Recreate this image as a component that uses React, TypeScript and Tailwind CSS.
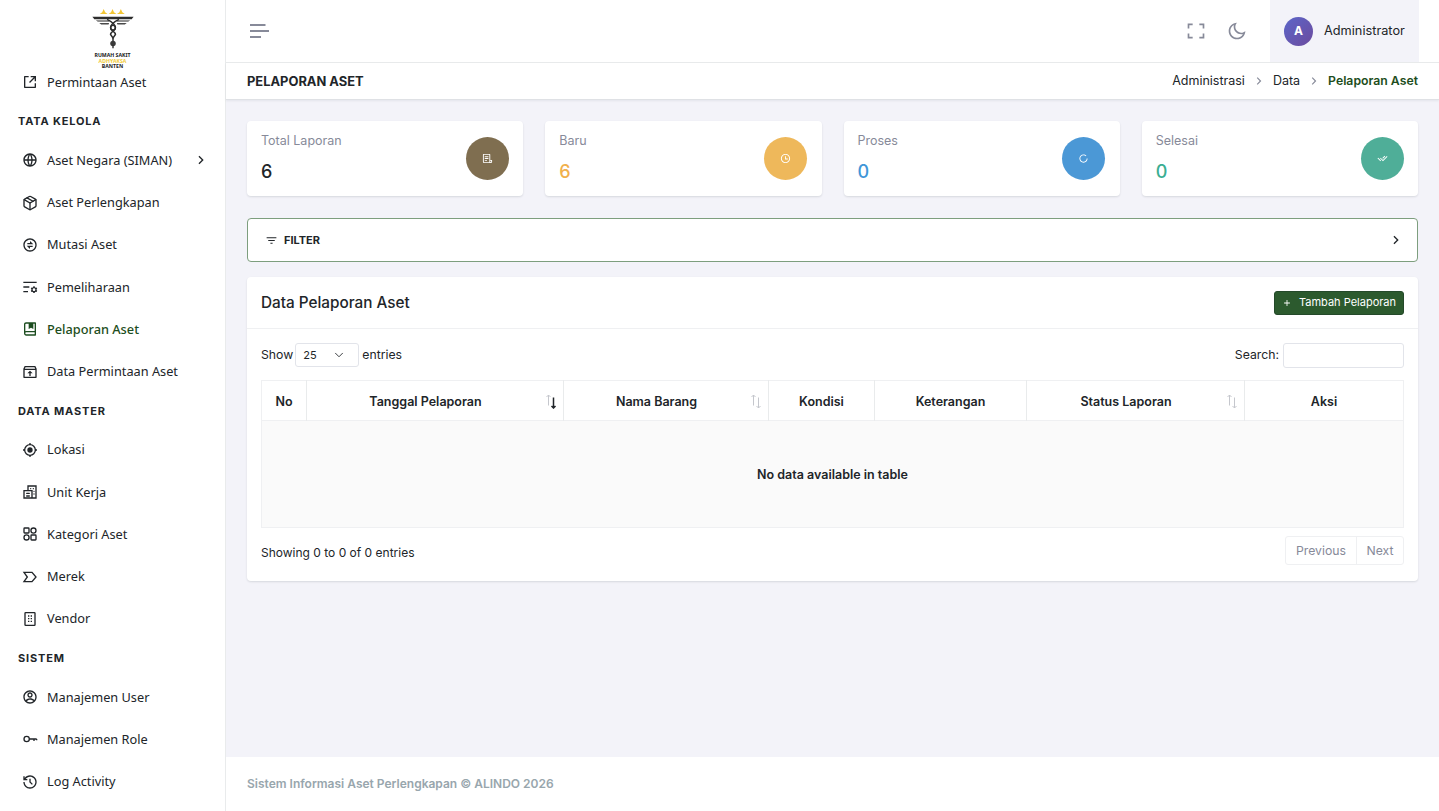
import type { ComponentType, ReactNode } from "react";
import {
  RiAccountCircleLine,
  RiAddLine,
  RiArrowRightSLine,
  RiBookMarkedLine,
  RiCheckDoubleLine,
  RiExchangeLine,
  RiFileList3Line,
  RiFilter3Line,
  RiFullscreenLine,
  RiGlobalLine,
  RiHistoryLine,
  RiInboxUnarchiveLine,
  RiListSettingsLine,
  RiLoader4Line,
  RiMoonLine,
  RiShareBoxLine,
  RiTimeLine,
} from "react-icons/ri";
import { ChevronDown, Package } from "lucide-react";

type IconType = ComponentType<{ className?: string }>;

function MerekIcon({ className }: { className?: string }) {
  return (
    <svg viewBox="0 0 24 24" fill="none" stroke="currentColor" strokeWidth="2" className={className}>
      <path d="M3 5h12l6 7-6 7H3l5-7z" />
    </svg>
  );
}

function LocationIcon({ className }: { className?: string }) {
  return (
    <svg viewBox="0 0 24 24" fill="none" stroke="currentColor" strokeWidth="2" className={className}>
      <circle cx="12" cy="12" r="8" />
      <circle cx="12" cy="12" r="4" fill="currentColor" stroke="none" />
      <path d="M12 1.5v3M12 19.5v3M1.5 12h3M19.5 12h3" />
    </svg>
  );
}

function KeyIcon({ className }: { className?: string }) {
  return (
    <svg viewBox="0 0 24 24" fill="none" stroke="currentColor" strokeWidth="2" className={className}>
      <circle cx="7" cy="12" r="4" />
      <path d="M11 12h11M18 12v3M22 12v2" />
    </svg>
  );
}

function CategoryIcon({ className }: { className?: string }) {
  return (
    <svg viewBox="0 0 24 24" fill="none" stroke="currentColor" strokeWidth="2" className={className}>
      <rect x="3" y="3" width="7.5" height="7.5" rx="1" />
      <circle cx="17.2" cy="6.8" r="3.8" />
      <circle cx="6.8" cy="17.2" r="3.8" />
      <rect x="13.5" y="13.5" width="7.5" height="7.5" rx="1" />
    </svg>
  );
}

function UnitIcon({ className }: { className?: string }) {
  return (
    <svg viewBox="0 0 24 24" fill="none" stroke="currentColor" strokeWidth="2" className={className}>
      <path d="M9 10V3h12v18H3V10h12v11" />
      <path d="M13 7h.01M17 7h.01M18 11h.01M18 15h.01M7 14h4M7 18h4" strokeLinecap="round" />
    </svg>
  );
}

function VendorIcon({ className }: { className?: string }) {
  return (
    <svg viewBox="0 0 24 24" fill="none" stroke="currentColor" strokeWidth="2" className={className}>
      <rect x="4.5" y="2.5" width="15" height="19" rx="1" />
      <path d="M9 7.5h2M13 7.5h2M9 11.5h2M13 11.5h2M9 15.5h2M13 15.5h2" />
    </svg>
  );
}

function MenuIcon({ className }: { className?: string }) {
  return (
    <svg viewBox="0 0 20 14" fill="none" stroke="currentColor" strokeWidth="2" className={className}>
      <path d="M0 1h15.5M0 7h19M0 13h11" />
    </svg>
  );
}

function Logo() {
  return (
    <div className="flex h-[70px] flex-col items-center pt-[9px]">
      <svg viewBox="0 0 44 44" className="h-[44px] w-[44px]">
        <g fill="#f3c634">
          <path d="M12.5 0 14 3.2 16.5 5h-8L11 3.2z" />
          <path d="M21.5 0 23 3.2 25.5 5h-8L20 3.2z" />
          <path d="M30 0 31.5 3.2 34 5h-8l2.5-1.8z" />
        </g>
        <path d="M1 8h42l-2 2.4H3z" fill="#2d2d2d" />
        <path d="M4.5 11.5h14l-.6 1.6H6.5zM39.5 11.5h-14l.6 1.6h11.4z" fill="#6f6f6f" />
        <path d="M8 14.2h10l-.5 1.6H10zM36 14.2H26l.5 1.6H34z" fill="#4a4a4a" />
        <g fill="none" stroke="#2d2d2d" strokeWidth="1.5">
          <path d="M16 10.5c3 1.5 8.5 4.5 8.5 8.5 0 3-5 4-5 7l2.5 3.5 2.5-3.5c0-3-5-4-5-7 0-4 5.5-7 8.5-8.5" />
          <circle cx="22" cy="19" r="2.4" />
          <path d="M22 29.5v3" />
        </g>
        <circle cx="22" cy="35" r="2.8" fill="#3a3a3a" />
        <path d="M22 37v3" stroke="#2d2d2d" strokeWidth="1.4" />
      </svg>
      <div className="mt-[1px] flex flex-col items-center text-[5.2px] leading-[5.6px] font-bold text-[#222]">
        <span>RUMAH SAKIT</span>
        <span className="text-[#f1cb3a]">ADHYAKSA</span>
        <span>BANTEN</span>
      </div>
    </div>
  );
}

function NavItem({
  icon: Icon,
  label,
  active,
  chevron,
}: {
  icon: IconType;
  label: string;
  active?: boolean;
  chevron?: boolean;
}) {
  return (
    <div
      className={`flex h-[42.25px] shrink-0 items-center pl-[22px] pr-[16px] text-[12.75px] ${
        active ? "font-medium text-[#1d4d20]" : "text-[#212529]"
      }`}
    >
      <Icon className="h-[16px] w-[16px] shrink-0" />
      <span className="ml-[9px] flex-1">{label}</span>
      {chevron && <RiArrowRightSLine className="h-[16px] w-[16px]" />}
    </div>
  );
}

function NavHeader({ children }: { children: ReactNode }) {
  return (
    <div className="flex h-[36px] shrink-0 items-center pl-[18px] font-['Inter',sans-serif] text-[11px] font-bold tracking-[0.075em] text-[#212529]">
      {children}
    </div>
  );
}

function Sidebar() {
  return (
    <aside className="flex h-full w-[226px] shrink-0 flex-col overflow-hidden border-r border-[#e9ebec] bg-white font-['Noto_Sans',sans-serif]">
      <Logo />
      <div className="-mt-[9px] flex flex-col">
        <NavItem icon={RiShareBoxLine} label="Permintaan Aset" />
        <NavHeader>TATA KELOLA</NavHeader>
        <NavItem icon={RiGlobalLine} label="Aset Negara (SIMAN)" chevron />
        <NavItem icon={Package} label="Aset Perlengkapan" />
        <NavItem icon={RiExchangeLine} label="Mutasi Aset" />
        <NavItem icon={RiListSettingsLine} label="Pemeliharaan" />
        <NavItem icon={RiBookMarkedLine} label="Pelaporan Aset" active />
        <NavItem icon={RiInboxUnarchiveLine} label="Data Permintaan Aset" />
        <NavHeader>DATA MASTER</NavHeader>
        <NavItem icon={LocationIcon} label="Lokasi" />
        <NavItem icon={UnitIcon} label="Unit Kerja" />
        <NavItem icon={CategoryIcon} label="Kategori Aset" />
        <NavItem icon={MerekIcon} label="Merek" />
        <NavItem icon={VendorIcon} label="Vendor" />
        <NavHeader>SISTEM</NavHeader>
        <NavItem icon={RiAccountCircleLine} label="Manajemen User" />
        <NavItem icon={KeyIcon} label="Manajemen Role" />
        <NavItem icon={RiHistoryLine} label="Log Activity" />
      </div>
    </aside>
  );
}

function Topbar() {
  return (
    <header className="flex h-[63px] shrink-0 items-center justify-between border-b border-[#e9ebec] bg-white pl-[24px] pr-[20px]">
      <MenuIcon className="h-[14px] w-[20px] text-[#878a99]" />
      <div className="flex h-full items-center">
        <RiFullscreenLine className="h-[20px] w-[20px] text-[#878a99]" />
        <RiMoonLine className="ml-[21px] h-[20px] w-[20px] text-[#878a99]" />
        <div className="ml-[23px] flex h-full w-[149px] items-center bg-[#f3f3f9] pl-[14px]">
          <div className="flex h-[29px] w-[29px] items-center justify-center rounded-full bg-gradient-to-br from-[#5a66c9] to-[#6b4a9e] text-[12px] font-bold text-white">
            A
          </div>
          <span className="ml-[11px] text-[12.75px] text-[#212529]">Administrator</span>
        </div>
      </div>
    </header>
  );
}

function TitleBar() {
  return (
    <div className="flex h-[37px] shrink-0 items-center justify-between border-b border-[#dfe1e5] bg-white pl-[21px] pr-[21px] shadow-[0_1px_2px_rgba(56,65,74,0.08)]">
      <h1 className="pt-[1px] text-[12.9px] font-bold text-[#212529]">PELAPORAN ASET</h1>
      <div className="flex items-center text-[12.5px] text-[#212529]">
        <span>Administrasi</span>
        <RiArrowRightSLine className="mx-[7px] h-[14px] w-[14px] text-[#878a99]" />
        <span>Data</span>
        <RiArrowRightSLine className="mx-[7px] h-[14px] w-[14px] text-[#878a99]" />
        <span className="text-[12.25px] font-semibold text-[#1d4d20]">Pelaporan Aset</span>
      </div>
    </div>
  );
}

function StatCard({
  label,
  value,
  valueClass,
  circleClass,
  icon: Icon,
}: {
  label: string;
  value: string;
  valueClass: string;
  circleClass: string;
  icon: IconType;
}) {
  return (
    <div className="flex h-[75px] items-center justify-between rounded-[4px] bg-white pl-[14px] pr-[14.5px] shadow-[0_1px_2px_rgba(56,65,74,0.15)]">
      <div className="pb-[1px]">
        <div className="text-[12.5px] leading-[18px] text-[#878a99]">{label}</div>
        <div className={`mt-[10px] text-[18px] leading-[24px] font-medium ${valueClass}`}>{value}</div>
      </div>
      <div className={`flex h-[43px] w-[43px] items-center justify-center rounded-full ${circleClass}`}>
        <Icon className="h-[11px] w-[11px] text-white" />
      </div>
    </div>
  );
}

function SortIcon({ active }: { active?: boolean }) {
  return (
    <svg viewBox="0 0 12 15" fill="none" strokeWidth="1" className="absolute right-[6px] top-[13px] h-[15px] w-[12px]">
      <path d="M3.5 11.5V1M1.5 3l2-2 2 2" stroke="#c5c7cd" />
      <path
        d="M8.5 3.5V14M6.5 12l2 2 2-2"
        stroke={active ? "#212529" : "#c5c7cd"}
        strokeWidth={active ? 1.5 : 1}
      />
    </svg>
  );
}

function HeadCell({ label, sort, active, width }: { label: string; sort?: boolean; active?: boolean; width: string }) {
  return (
    <th
      className={`relative border-r border-[#e9ebec] pt-[3px] text-center text-[12.5px] font-semibold text-[#212529] last:border-r-0 ${width} ${
        sort ? "pr-[19px]" : ""
      }`}
    >
      {label}
      {sort && <SortIcon active={active} />}
    </th>
  );
}

function DataCard() {
  return (
    <section className="mt-[15px] rounded-[4px] bg-white shadow-[0_1px_2px_rgba(56,65,74,0.15)]">
      <div className="flex h-[52px] items-center justify-between border-b border-[#eff0f2] px-[14px]">
        <h2 className="pt-[1px] text-[15.3px] font-medium text-[#212529]">Data Pelaporan Aset</h2>
        <button className="flex h-[24px] w-[130px] items-center justify-center rounded-[3px] border border-[#24492a] bg-[#2c5a2e] text-[11px] text-white">
          <RiAddLine className="mr-[7px] h-[10px] w-[10px]" />
          Tambah Pelaporan
        </button>
      </div>
      <div className="px-[14px] pt-[13px] pb-[16px]">
        <div className="flex h-[26px] items-center justify-between text-[12.25px] text-[#212529]">
          <div className="flex items-center">
            <span>Show</span>
            <div className="ml-[2px] mr-[3px] flex h-[24px] w-[64px] items-center justify-between rounded-[3px] border border-[#e2e4ea] pl-[7px] pr-[12px] text-[11px]">
              25
              <ChevronDown className="h-[14px] w-[14px]" strokeWidth={1.5} />
            </div>
            <span>entries</span>
          </div>
          <div className="flex items-center">
            <span>Search:</span>
            <div className="ml-[4px] h-[25px] w-[121px] rounded-[3px] border border-[#e2e4ea]" />
          </div>
        </div>
        <table className="mt-[12px] w-[1142px] table-fixed border border-[#eff0f2]">
          <thead>
            <tr className="h-[40px] border-b border-[#eff0f2]">
              <HeadCell label="No" width="w-[45px]" />
              <HeadCell label="Tanggal Pelaporan" sort active width="w-[257px]" />
              <HeadCell label="Nama Barang" sort width="w-[205px]" />
              <HeadCell label="Kondisi" width="w-[106px]" />
              <HeadCell label="Keterangan" width="w-[152px]" />
              <HeadCell label="Status Laporan" sort width="w-[218px]" />
              <HeadCell label="Aksi" width="w-[159px]" />
            </tr>
          </thead>
          <tbody>
            <tr className="h-[107px] bg-[#fafafa]">
              <td colSpan={7} className="pt-[2px] text-center text-[12.5px] font-semibold text-[#212529]">
                No data available in table
              </td>
            </tr>
          </tbody>
        </table>
        <div className="mt-[8px] flex items-center justify-between text-[12px] text-[#212529]">
          <span className="pt-[5px]">Showing 0 to 0 of 0 entries</span>
          <div className="flex h-[29px] items-center rounded-[3px] border border-[#eff0f2] text-[12.25px] text-[#878a99]">
            <span className="flex h-full w-[71px] items-center justify-center border-r border-[#eff0f2] pt-[2px]">Previous</span>
            <span className="flex h-full w-[46px] items-center justify-center pt-[2px]">Next</span>
          </div>
        </div>
      </div>
    </section>
  );
}

export default function App() {
  return (
    <div className="flex h-screen overflow-hidden bg-[#f3f3f9] font-['Inter',sans-serif]">
      <Sidebar />
      <div className="flex min-w-0 flex-1 flex-col">
        <Topbar />
        <TitleBar />
        <main className="flex-1 px-[21px] pt-[21px]">
          <div className="grid grid-cols-4 gap-[22px]">
            <StatCard label="Total Laporan" value="6" valueClass="text-[#212529]" circleClass="bg-[#7f6e50]" icon={RiFileList3Line} />
            <StatCard label="Baru" value="6" valueClass="text-[#f1b04c]" circleClass="bg-[#eeb85b]" icon={RiTimeLine} />
            <StatCard label="Proses" value="0" valueClass="text-[#3f96d8]" circleClass="bg-[#4b98d6]" icon={RiLoader4Line} />
            <StatCard label="Selesai" value="0" valueClass="text-[#3aae92]" circleClass="bg-[#4fae98]" icon={RiCheckDoubleLine} />
          </div>
          <div className="mt-[22px] flex h-[44px] items-center rounded-[4px] border border-[#7d9e7e] bg-white pl-[17px] pr-[13px]">
            <RiFilter3Line className="h-[13px] w-[13px] text-[#212529]" />
            <span className="ml-[6px] flex-1 text-[11px] font-bold text-[#212529]">FILTER</span>
            <RiArrowRightSLine className="h-[16px] w-[16px] text-[#212529]" />
          </div>
          <DataCard />
        </main>
        <footer className="flex h-[54px] shrink-0 items-center bg-white pl-[21px] text-[12px] font-semibold text-[#98a6ad]">
          Sistem Informasi Aset Perlengkapan © ALINDO 2026
        </footer>
      </div>
    </div>
  );
}
